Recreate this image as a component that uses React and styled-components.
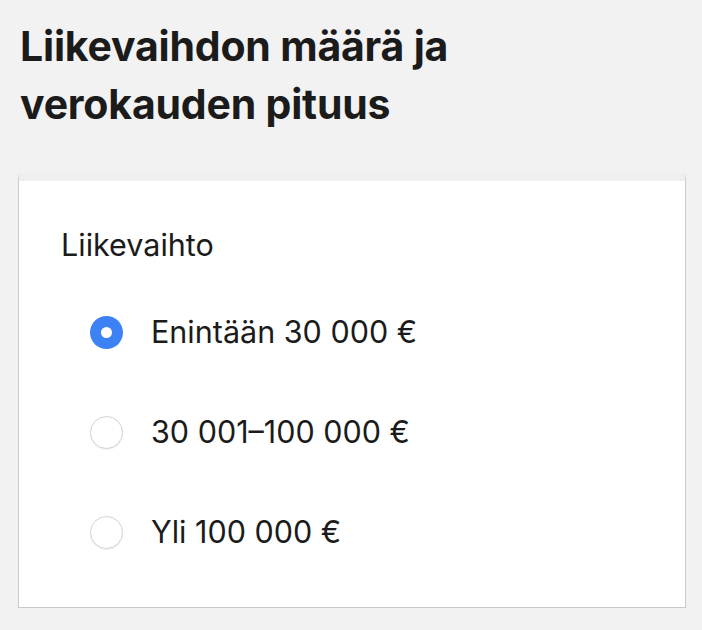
import styled, { createGlobalStyle } from "styled-components";

const GlobalStyle = createGlobalStyle`
  html, body {
    margin: 0;
    padding: 0;
    background: #f2f2f2;
  }
  body {
    font-family: Inter, "Noto Sans", sans-serif;
    color: #1b1b1b;
  }
`;

const Page = styled.div`
  padding: 17px 16px 0 18px;
`;

const Title = styled.h1`
  margin: 0 0 0 2px;
  font-size: 41px;
  font-weight: 700;
  line-height: 58px;
  letter-spacing: -0.2px;
  max-width: 480px;
`;

const Card = styled.fieldset`
  margin: 40px 0 0 0;
  padding: 46px 40px 57px 42px;
  min-width: 0;
  background: #fff;
  border: 1.5px solid #c9c9c9;
  border-top: 8px solid #edf0ed;
`;

const Legend = styled.div`
  font-size: 30.5px;
  font-weight: 400;
  line-height: 36px;
  margin-bottom: 51px;
`;

const Options = styled.div`
  display: flex;
  flex-direction: column;
  gap: 64px;
  padding-left: 29px;
`;

const Option = styled.label`
  display: flex;
  align-items: center;
  gap: 28px;
  font-size: 30.5px;
  line-height: 36px;
`;

const Radio = styled.span`
  box-sizing: border-box;
  width: 33px;
  height: 33px;
  border-radius: 50%;
  flex: none;
  display: flex;
  align-items: center;
  justify-content: center;
  background: ${(p) => (p.checked ? "#3d82f5" : "#fff")};
  border: ${(p) => (p.checked ? "none" : "1px solid #d3d3d3")};
  box-shadow: ${(p) => (p.checked ? "none" : "0 1px 1px rgba(0,0,0,0.06)")};
  &::after {
    content: "";
    display: ${(p) => (p.checked ? "block" : "none")};
    width: 11px;
    height: 11px;
    border-radius: 50%;
    background: #fff;
  }
`;

const options = ["Enintään 30 000 €", "30 001–100 000 €", "Yli 100 000 €"];

export default function App() {
  return (
    <>
      <GlobalStyle />
      <Page>
        <Title>Liikevaihdon määrä ja verokauden pituus</Title>
        <Card>
          <Legend>Liikevaihto</Legend>
          <Options>
            {options.map((o, i) => (
              <Option key={o}>
                <Radio checked={i === 0} />
                {o}
              </Option>
            ))}
          </Options>
        </Card>
      </Page>
    </>
  );
}
